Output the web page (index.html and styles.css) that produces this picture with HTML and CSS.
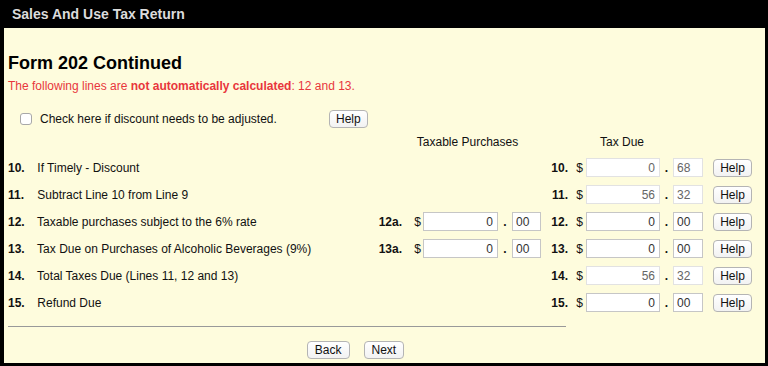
FILE: index.html
```html
<!DOCTYPE html>
<html lang="en">
<head>
    <meta charset="UTF-8">
    <meta name="viewport" content="width=device-width, initial-scale=1.0">
    <title>Sales And Use Tax Return</title>
    <link rel="stylesheet" href="styles.css">
</head>
<body>
    <div class="frame">
        <div class="title-bar">Sales And Use Tax Return</div>
        <div class="content">
            <h1>Form 202 Continued</h1>
            <p class="notice">The following lines are <strong>not automatically calculated</strong>: 12 and 13.</p>

            <div class="check-row">
                <label class="check-label"><input type="checkbox" class="check"> Check here if discount needs to be adjusted.</label>
                <button class="btn">Help</button>
            </div>

            <div class="grid-row col-heads">
                <span class="head-purch">Taxable Purchases</span>
                <span class="head-due">Tax Due</span>
            </div>

            <div class="grid-row">
                <span class="label"><b>10.</b> If Timely - Discount</span>
                <b class="num2">10.</b><span class="dollar2">$</span>
                <input class="whole2 ro" value="0" readonly><span class="dot2">.</span><input class="cents2 ro" value="68" readonly>
                <button class="btn help">Help</button>
            </div>

            <div class="grid-row">
                <span class="label"><b>11.</b> Subtract Line 10 from Line 9</span>
                <b class="num2">11.</b><span class="dollar2">$</span>
                <input class="whole2 ro" value="56" readonly><span class="dot2">.</span><input class="cents2 ro" value="32" readonly>
                <button class="btn help">Help</button>
            </div>

            <div class="grid-row">
                <span class="label"><b>12.</b> Taxable purchases subject to the 6% rate</span>
                <b class="num1">12a.</b><span class="dollar1">$</span>
                <input class="whole1" value="0"><span class="dot1">.</span><input class="cents1" value="00">
                <b class="num2">12.</b><span class="dollar2">$</span>
                <input class="whole2" value="0"><span class="dot2">.</span><input class="cents2" value="00">
                <button class="btn help">Help</button>
            </div>

            <div class="grid-row">
                <span class="label"><b>13.</b> Tax Due on Purchases of Alcoholic Beverages (9%)</span>
                <b class="num1">13a.</b><span class="dollar1">$</span>
                <input class="whole1" value="0"><span class="dot1">.</span><input class="cents1" value="00">
                <b class="num2">13.</b><span class="dollar2">$</span>
                <input class="whole2" value="0"><span class="dot2">.</span><input class="cents2" value="00">
                <button class="btn help">Help</button>
            </div>

            <div class="grid-row">
                <span class="label"><b>14.</b> Total Taxes Due (Lines 11, 12 and 13)</span>
                <b class="num2">14.</b><span class="dollar2">$</span>
                <input class="whole2 ro" value="56" readonly><span class="dot2">.</span><input class="cents2 ro" value="32" readonly>
                <button class="btn help">Help</button>
            </div>

            <div class="grid-row">
                <span class="label"><b>15.</b> Refund Due</span>
                <b class="num2">15.</b><span class="dollar2">$</span>
                <input class="whole2" value="0"><span class="dot2">.</span><input class="cents2" value="00">
                <button class="btn help">Help</button>
            </div>

            <hr class="divider">

            <div class="nav">
                <button class="btn nav-btn">Back</button>
                <button class="btn nav-btn">Next</button>
            </div>
        </div>
    </div>
</body>
</html>
```

FILE: styles.css
```css
body {
    margin: 0;
    font-family: "Liberation Sans", Arial, sans-serif;
    font-size: 12px;
    color: #111;
    background: #000;
}
.frame {
    height: 363px;
    border-left: 4px solid #000;
    border-right: 3px solid #000;
    border-bottom: 3px solid #000;
    background: #fefcdd;
}
.title-bar {
    height: 28px;
    line-height: 28px;
    padding-left: 8px;
    background: #000;
    color: #dcdcdc;
    font-size: 14px;
    font-weight: bold;
}
.content {
    padding: 0 4px;
}
h1 {
    margin: 0;
    padding-top: 24px;
    font-size: 18px;
    line-height: 22px;
    color: #000;
}
.notice {
    margin: 5px 0 0;
    line-height: 14px;
    color: #e8363c;
}
.check-row {
    display: flex;
    align-items: center;
    height: 20px;
    margin-top: 16px;
}
.check-label {
    display: flex;
    align-items: center;
    width: 309px;
    padding-left: 12px;
}
.check {
    appearance: none;
    -webkit-appearance: none;
    width: 12px;
    height: 12px;
    margin: 0 8px 0 0;
    border: 1px solid #a8a8a8;
    border-radius: 3px;
    background: #fff;
}
.btn {
    height: 18px;
    padding: 0 6px;
    font-family: "Liberation Sans", Arial, sans-serif;
    font-size: 12px;
    color: #111;
    background: linear-gradient(#fff, #f2f2f2);
    border: 1px solid #b4b4b4;
    border-radius: 4px;
}
/* Columns of the form lines */
.grid-row {
    display: grid;
    grid-template-columns: 368px 26px 21px 75px 14px 29px 27px 18px 74px 13px 30px 10px 39px;
    align-items: center;
    height: 27px;
}
.col-heads {
    height: 24px;
    margin-top: 1px;
}
.label {
    grid-column: 1;
}
.label b {
    display: inline-block;
    width: 26px;
}
.head-purch {
    grid-column: 3 / 7;
    text-align: center;
    padding-right: 8px;
}
.head-due {
    grid-column: 7 / 12;
    text-align: center;
}
.num1 { grid-column: 2; text-align: right; }
.dollar1 { grid-column: 3; text-align: right; padding-right: 2px; }
.whole1 { grid-column: 4; }
.dot1 { grid-column: 5; text-align: center; font-weight: bold; }
.cents1 { grid-column: 6; }
.num2 { grid-column: 7; text-align: right; }
.dollar2 { grid-column: 8; text-align: right; padding-right: 3px; }
.whole2 { grid-column: 9; }
.dot2 { grid-column: 10; text-align: center; font-weight: bold; }
.cents2 { grid-column: 11; }
.help { grid-column: 13; padding: 0; }

input {
    box-sizing: border-box;
    height: 19px;
    width: 100%;
    margin: 0;
    padding: 0 3px;
    font-family: "Liberation Sans", Arial, sans-serif;
    font-size: 12px;
    color: #333;
    background: #fff;
    border: 1px solid #c6c6c6;
}
.whole1, .whole2 {
    text-align: right;
    padding-right: 4px;
}
input.ro {
    color: #666;
    border-color: #e2e2e2;
}
.divider {
    width: 558px;
    margin: 10px 0 0;
    border: 0;
    border-top: 1px solid #999;
}
.nav {
    display: flex;
    justify-content: center;
    gap: 14px;
    padding-right: 58px;
    margin-top: 14px;
}
.nav-btn {
    padding: 0 7px;
}
```
